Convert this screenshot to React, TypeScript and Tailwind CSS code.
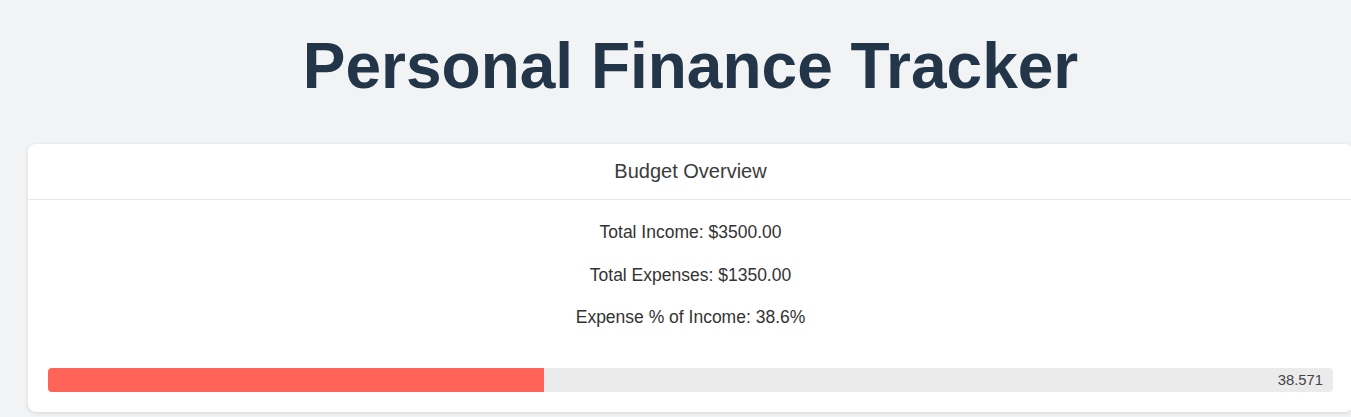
import React from 'react';

const income = 3500;
const expenses = 1350;

const App: React.FC = () => {
  const pct = (expenses / income) * 100;

  return (
    <div className="min-h-screen w-full overflow-hidden bg-[#f2f3f5] font-['Liberation_Sans',Arial,sans-serif]">
      <div className="w-[1381px] px-[28px] pt-[29px]">
        <h1 className="text-center text-[64px] leading-[74px] font-bold text-[#233548] mb-[41px]">
          Personal Finance Tracker
        </h1>

        <div className="bg-white rounded-lg shadow-[0_1px_4px_rgba(0,0,0,0.12)]">
          <div className="py-4 text-center text-[20px] leading-[23px] text-[#3b3b3b] border-b border-[#e8e8e8]">
            Budget Overview
          </div>

          <div className="px-5 pt-[22px] pb-5">
            <div className="flex flex-col gap-[22.5px] text-center text-[17.5px] leading-[20px] text-[#333]">
              <p>Total Income: ${income.toFixed(2)}</p>
              <p>Total Expenses: ${expenses.toFixed(2)}</p>
              <p>Expense % of Income: {pct.toFixed(1)}%</p>
            </div>

            <div className="relative mt-[41px] h-6 rounded bg-[#ebebeb] overflow-hidden">
              <div className="h-full bg-[#ff6358]" style={{ width: `${pct}%` }} />
              <span className="absolute right-[10px] top-0 h-full flex items-center text-[14.8px] text-[#444]">
                {pct.toFixed(3)}
              </span>
            </div>
          </div>
        </div>
      </div>
    </div>
  );
};

export default App;
